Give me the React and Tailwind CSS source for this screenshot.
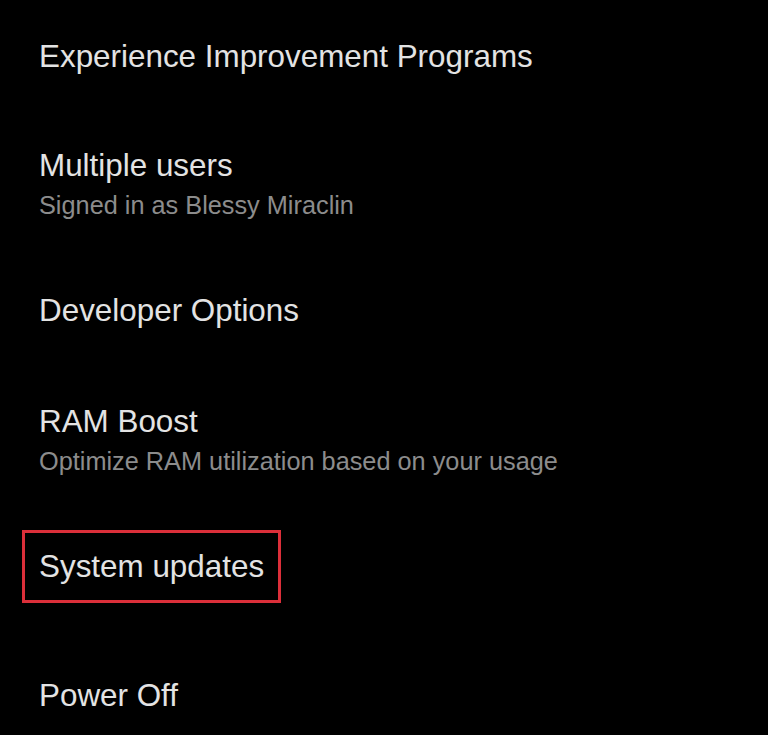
import React from "react";

const font = { fontFamily: '"Liberation Sans", Arial, sans-serif' };

function Title({ children }) {
  return (
    <div className="text-[31.4px] leading-[40px] text-[#e3e3e3] whitespace-nowrap">
      {children}
    </div>
  );
}

function Sub({ children }) {
  return (
    <div className="text-[25.3px] leading-[38px] text-[#8c8c8c] whitespace-nowrap">
      {children}
    </div>
  );
}

export default function App() {
  return (
    <div
      className="w-[768px] h-[735px] bg-black overflow-hidden flex flex-col items-start pl-[39px] pt-[36.6px]"
      style={font}
    >
      <div>
        <Title>Experience Improvement Programs</Title>
      </div>
      <div className="mt-[69.8px]">
        <Title>Multiple users</Title>
        <Sub>Signed in as Blessy Miraclin</Sub>
      </div>
      <div className="mt-[67px]">
        <Title>Developer Options</Title>
      </div>
      <div className="mt-[71px]">
        <Title>RAM Boost</Title>
        <Sub>Optimize RAM utilization based on your usage</Sub>
      </div>
      <div className="mt-[49.6px] -ml-[17px] border-[3px] border-[#dc2f3a] px-[14px] pt-[14px] pb-[13px]">
        <Title>System updates</Title>
      </div>
      <div className="mt-[73.4px]">
        <Title>Power Off</Title>
      </div>
    </div>
  );
}
